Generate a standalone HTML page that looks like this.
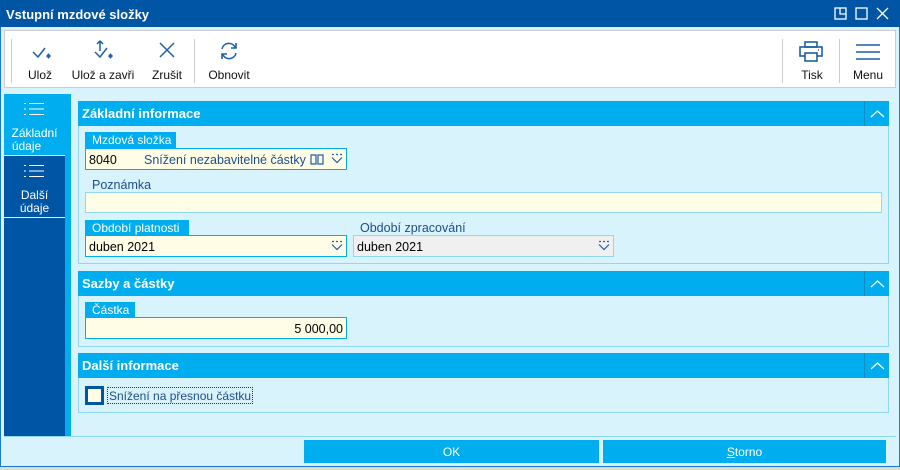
<!DOCTYPE html>
<html><head><meta charset="utf-8"><style>
*{box-sizing:border-box;margin:0;padding:0}
body{width:900px;height:470px;overflow:hidden;background:#dcdcc8;font-family:"Liberation Sans",sans-serif;font-size:12px;position:relative}
.a{position:absolute;white-space:nowrap}
.win{left:0;top:0;width:900px;height:467px;background:#d9f3fd;border:1px solid #1a78d0}
.title{left:0;top:0;width:900px;height:27px;background:#0055a5;color:#fff;font-weight:bold;font-size:13px;padding:7px 0 0 6px}
.tb{left:4px;top:30px;width:892px;height:58px;background:#fff;border:1px solid #ccc}
.btn{top:0;height:58px;text-align:center;color:#111;font-size:12px}
.btn span{position:absolute;left:0;right:0;top:37px}
.sep{top:8px;width:1px;height:44px;background:#ccc}
.ph{height:25px;background:#00aeef;color:#fff;font-weight:bold;font-size:13px;padding:5px 0 0 4px}
.pb{border:1px solid #8fd8f5;border-top:none}
.lt{background:#00aeef;color:#fff;height:16px;padding:1px 0 0 7px;font-size:12px}
.in{background:#fffde6;border:1px solid #00aeef;height:22px;padding:4px 0 0 3px;font-size:12.5px;color:#000}
.lbl{color:#1c4f8a;font-size:12.5px}
.chev{width:25px;height:25px;border-left:1px solid #0a8cc5}
.bb{background:#00aeef;color:#fff;height:23px;text-align:center;padding-top:5px;font-size:12px}
</style></head><body>
<div class="a win"></div>
<div class="a title">Vstupní mzdové složky</div>
<svg class="a" style="left:834px;top:7px" width="60" height="14" viewBox="0 0 60 14" fill="none" stroke="#fff" stroke-width="1.3"><rect x="1" y="1" width="11" height="11"/><path d="M6 1V7H12"/><rect x="22" y="1" width="11" height="11"/><path d="M43 1L54 12M54 1L43 12"/></svg>
<div class="a tb">
 <div class="a sep" style="left:6px"></div>
 <div class="a btn" style="left:10px;width:50px"><svg class="a" style="left:16px;top:13px" width="22" height="18" viewBox="0 0 22 18" fill="none" stroke="#1d5fa8" stroke-width="1.5"><path d="M2 8L7 13L14 4"/><path d="M15 12h5M17.5 9.5v5M16 10.5l3 3M19 10.5l-3 3" stroke-width="1"/></svg><span>Ulož</span></div>
 <div class="a btn" style="left:64px;width:68px"><svg class="a" style="left:24px;top:8px" width="22" height="24" viewBox="0 0 22 24" fill="none" stroke="#1d5fa8" stroke-width="1.5"><path d="M2 13L7 18L14 9"/><path d="M7 12V2M4 5L7 2L10 5"/><path d="M15 17h5M17.5 14.5v5M16 15.5l3 3M19 15.5l-3 3" stroke-width="1"/></svg><span>Ulož a zavři</span></div>
 <div class="a btn" style="left:140px;width:44px"><svg class="a" style="left:14px;top:11px" width="16" height="16" viewBox="0 0 16 16" stroke="#1d5fa8" stroke-width="1.5"><path d="M1 1L15 15M15 1L1 15"/></svg><span>Zrušit</span></div>
 <div class="a sep" style="left:189px"></div>
 <div class="a btn" style="left:196px;width:56px"><svg class="a" style="left:18px;top:10px" width="20" height="20" viewBox="0 0 20 20" fill="none" stroke="#1d5fa8" stroke-width="1.6"><path d="M3 8A7 7 0 0 1 16 6M17 2V7H12"/><path d="M17 12A7 7 0 0 1 4 14M3 18V13H8"/></svg><span>Obnovit</span></div>
 <div class="a sep" style="left:777px"></div>
 <div class="a btn" style="left:782px;width:50px"><svg class="a" style="left:12px;top:10px" width="24" height="22" viewBox="0 0 24 22" fill="none" stroke="#1d5fa8" stroke-width="1.6"><rect x="6" y="1" width="12" height="5"/><rect x="1" y="6" width="22" height="9"/><rect x="6" y="12" width="12" height="8" fill="#fff"/><path d="M19 9h1"/></svg><span>Tisk</span></div>
 <div class="a sep" style="left:834px"></div>
 <div class="a btn" style="left:838px;width:50px"><svg class="a" style="left:13px;top:13px" width="24" height="16" viewBox="0 0 24 16" stroke="#1d5fa8" stroke-width="1.5"><path d="M0 1H24M0 8H24M0 15H24"/></svg><span>Menu</span></div>
</div>
<div class="a" style="left:4px;top:94px;width:61px;height:342px;background:#0055a5"></div>
<div class="a" style="left:65px;top:94px;width:6px;height:342px;background:#00aeef"></div>
<div class="a" style="left:4px;top:94px;width:61px;height:61px;background:#00aeef"></div>
<div class="a" style="left:4px;top:217px;width:61px;height:1px;background:#d9f3fd"></div>
<div class="a" style="left:4px;top:155px;width:61px;height:1px;background:#d9f3fd"></div>
<svg class="a" style="left:23px;top:102px" width="22" height="14" viewBox="0 0 22 14" stroke="#fff" stroke-width="1"><path d="M1 1.5h2M6 1.5h15M1 7h2M6 7h15M1 12.5h2M6 12.5h15"/></svg>
<svg class="a" style="left:23px;top:164px" width="22" height="14" viewBox="0 0 22 14" stroke="#fff" stroke-width="1"><path d="M1 1.5h2M6 1.5h15M1 7h2M6 7h15M1 12.5h2M6 12.5h15"/></svg>
<div class="a" style="left:4px;top:127px;width:61px;color:#fff;font-size:12px;line-height:13px;text-align:center">Základní<br><span style="margin-left:-16px">údaje</span></div>
<div class="a" style="left:4px;top:189px;width:61px;color:#fff;font-size:12px;line-height:13px;text-align:center">Další<br>údaje</div>
<div class="a ph" style="left:78px;top:101px;width:811px">Základní informace</div>
<div class="a chev" style="left:864px;top:101px"><svg width="25" height="25" fill="none" stroke="#fff" stroke-width="1.2"><path d="M6 16L12.5 10L19 16"/></svg></div>
<div class="a pb" style="left:78px;top:126px;width:811px;height:138px"></div>
<div class="a lt" style="left:85px;top:132px;width:91px">Mzdová složka</div>
<div class="a in" style="left:85px;top:148px;width:262px">8040<span class="a lbl" style="left:58px;top:4px">Snížení nezabavitelné částky</span>
<svg class="a" style="left:224px;top:5px" width="14" height="11" viewBox="0 0 14 11" fill="none" stroke="#1d5fa8" stroke-width="1.2"><path d="M1 1h5v9H1zM8 1h5v9H8z"/></svg>
<svg class="a" style="left:245px;top:4px" width="12" height="11" viewBox="0 0 12 11" fill="none" stroke="#1d5fa8" stroke-width="1.2"><path d="M1 1.5h2M5 1.5h2M9 1.5h2M1 4.5L6 9.5L11 4.5"/></svg></div>
<div class="a lbl" style="left:92px;top:178px">Poznámka</div>
<div class="a in" style="left:85px;top:192px;width:797px;height:21px;border-color:#8fd8f5"></div>
<div class="a lt" style="left:85px;top:220px;width:104px">Období platnosti</div>
<div class="a in" style="left:85px;top:235px;width:262px">duben 2021<svg class="a" style="left:245px;top:4px" width="12" height="11" viewBox="0 0 12 11" fill="none" stroke="#1d5fa8" stroke-width="1.2"><path d="M1 1.5h2M5 1.5h2M9 1.5h2M1 4.5L6 9.5L11 4.5"/></svg></div>
<div class="a lbl" style="left:360px;top:221px">Období zpracování</div>
<div class="a in" style="left:353px;top:235px;width:261px;background:#f0f0f0;border-color:#8fd8f5">duben 2021<svg class="a" style="left:244px;top:4px" width="12" height="11" viewBox="0 0 12 11" fill="none" stroke="#1d5fa8" stroke-width="1.2"><path d="M1 1.5h2M5 1.5h2M9 1.5h2M1 4.5L6 9.5L11 4.5"/></svg></div>
<div class="a ph" style="left:78px;top:271px;width:811px">Sazby a částky</div>
<div class="a chev" style="left:864px;top:271px"><svg width="25" height="25" fill="none" stroke="#fff" stroke-width="1.2"><path d="M6 16L12.5 10L19 16"/></svg></div>
<div class="a pb" style="left:78px;top:296px;width:811px;height:51px"></div>
<div class="a lt" style="left:85px;top:302px;width:50px">Částka</div>
<div class="a in" style="left:85px;top:317px;width:262px;text-align:right;padding-right:3px">5 000,00</div>
<div class="a ph" style="left:78px;top:353px;width:811px">Další informace</div>
<div class="a chev" style="left:864px;top:353px"><svg width="25" height="25" fill="none" stroke="#fff" stroke-width="1.2"><path d="M6 16L12.5 10L19 16"/></svg></div>
<div class="a pb" style="left:78px;top:378px;width:811px;height:35px"></div>
<div class="a" style="left:85px;top:386px;width:19px;height:19px;border:3px solid #0055a5;background:#fffde6"></div>
<div class="a lbl" style="left:107px;top:387px;height:17px;border:1px dotted #333;padding:1px 1px 0 1px;font-size:12px">Snížení na přesnou částku</div>
<div class="a" style="left:4px;top:436px;width:892px;height:1px;background:#8fd8f5"></div>
<div class="a bb" style="left:304px;top:440px;width:295px">OK</div>
<div class="a bb" style="left:603px;top:440px;width:283px"><u>S</u>torno</div>
</body></html>
